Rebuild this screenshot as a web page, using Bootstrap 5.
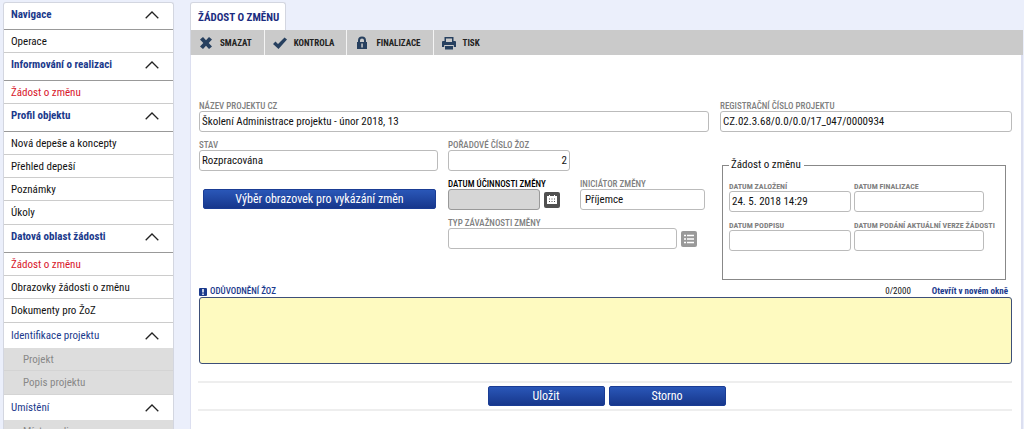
<!DOCTYPE html>
<html lang="cs">
<head>
<meta charset="utf-8">
<meta name="viewport" content="width=device-width, initial-scale=1">
<title>Žádost o změnu</title>
<link href="https://cdn.jsdelivr.net/npm/bootstrap@5.3.0/dist/css/bootstrap.min.css" rel="stylesheet">
<style>
  body { background: #ebeffb; color: #111; font: 11px/16px "Roboto Condensed", "Liberation Sans Narrow", sans-serif; }
  .page { min-height: 100vh; padding: 2px 1px 0 3px; gap: 16px; }
  .page-side { flex: 0 0 171px; background: #fff; border: 1px solid #d3d6e0; border-bottom: 0; border-radius: 3px 3px 0 0; height: calc(100vh - 2px); overflow: hidden; }
  .side-head { height: 28px; width: 100%; padding: 0 14px 3px 7px; border: 0; border-bottom: 1px solid #999; background: none; color: #1b3a8c; font-weight: bold; text-align: left; }
  .side-head.top-head { height: 27px; padding-bottom: 2px; }
  .side-head.sub-head { height: 25px; font-weight: normal; border: 0; padding-bottom: 0; }
  .side-head svg { width: 14px; height: 8px; }
  .side-list a { display: block; height: 23px; line-height: 24px; padding-left: 7px; color: #111; text-decoration: none; border-bottom: 1px solid #ccc; white-space: nowrap; }
  .side-list li + li:last-child a { height: 24px; }
  .side-list a.active { color: #d8152a; }
  .side-list.sub-list a { background: #ddd; color: #888; padding-left: 19px; border-color: #d4d4d4; }
  .page-main { min-width: 0; }
  .tab-title { height: 28px; padding: 1px 6px 0 7px; background: #fff; border: 1px solid #d3d6e0; border-bottom: 0; border-radius: 3px 3px 0 0; color: #1b2c80; font-size: 11px; line-height: 27px; font-weight: bold; }
  .toolbar { background: #cacaca; height: 25px; border-left: 1px solid #d3d6e0; }
  .tool { border: 0; border-right: 1px solid #f4f4f4; background: none; padding: 0 12px 0 8px; gap: 7px; font-size: 9px; font-weight: bold; color: #222; }
  .tool:last-child { border: 0; }
  .tool svg { width: 14px; height: 14px; fill: #27405f; }
  .panel { background: #fff; border: solid #dcdff0; border-width: 0 2px 0 1px; padding: 46px 9px 0 8px; }
  .form-label { display: block; margin: 0; font-size: 9px; line-height: 11px; height: 10px; font-weight: 500; color: #808080; white-space: nowrap; }
  .form-control { height: 21px; min-height: 0; padding: 0 2px; font-size: 11px; line-height: 19px; color: #111; border: 1px solid #bbb; border-radius: 3px; }
  .form-control:disabled { background: #d6d6d6; border-color: #999; }
  .side-col { flex: 0 0 292px; min-width: 0; }
  .form-row { gap: 11px; }
  .left-cols { gap: 10px; min-width: 0; }
  .lead-col { flex: 239 1 0; }
  .detail-col { flex: 261 1 0; }
  .stack { display: flex; flex-direction: column; gap: 8px; }
  .num-box { width: 122px; }
  .effect-box { flex: 0 0 112px; }
  .btn-blue { --bs-btn-color: #fff; --bs-btn-hover-color: #fff; height: 20px; padding: 0; font-size: 12px; line-height: 18px; border: 1px solid #1a3c94; border-radius: 2px; background: linear-gradient(#2a57b8, #17378c); }
  .screens { padding: 18px 2px 0 4px; }
  .pick { flex: 0 0 16px; height: 16px; border: 0; border-radius: 2px; background: #505050; padding: 0; }
  .pick.pale { background: #999; }
  .pick svg { display: block; margin: auto; width: 10px; height: 10px; }
  .date-box { border: 1px solid #888; height: 122px; padding: 0 2px 0 6px; margin: 18px 6px 0 2px; }
  .date-box legend { float: none; width: auto; margin: 0 0 9px; padding: 0 3px 0 2px; font-size: 11px; line-height: 14px; color: #111; }
  .date-box .form-label { font-size: 8px; font-weight: bold; }
  .date-grid { display: grid; grid-template-columns: 122px 130px; gap: 8px 3px; }
  .reason { height: 67px; background: #fefac0; border-color: #3d4f78; resize: none; }
  .form-label.reason-label { color: #1b3a8c; display: flex; gap: 3px; }
  .reason-label svg { width: 8px; height: 8px; margin-top: 2px; }
  .reason-head { margin-top: 6px; height: 11px; }
  .link-open { color: #1b3a8c; font-weight: bold; text-decoration: none; }
  .reason-info { font-size: 9px; line-height: 10px; gap: 21px; }
  .actions { border: solid #eee; border-width: 2px 0; padding: 3px 0 3px 3px; margin: 17px 0 0 -1px; gap: 4px; }
  .actions .btn { width: 117px; }
</style>
</head>
<body>
<svg class="d-none"><symbol id="up" viewBox="0 0 14 8"><path d="M.7 7.3 7 1l6.3 6.3" fill="none" stroke="#222" stroke-width="1.3"/></symbol></svg>
<div class="page d-flex">
  <nav class="page-side">
    <button type="button" class="side-head top-head d-flex align-items-center justify-content-between">Navigace<svg><use href="#up"/></svg></button>
    <ul class="side-list list-unstyled m-0"><li><a href="#">Operace</a></li></ul>
    <button type="button" class="side-head d-flex align-items-center justify-content-between">Informování o realizaci<svg><use href="#up"/></svg></button>
    <ul class="side-list list-unstyled m-0"><li><a href="#" class="active">Žádost o změnu</a></li></ul>
    <button type="button" class="side-head d-flex align-items-center justify-content-between">Profil objektu<svg><use href="#up"/></svg></button>
    <ul class="side-list list-unstyled m-0">
      <li><a href="#">Nová depeše a koncepty</a></li>
      <li><a href="#">Přehled depeší</a></li>
      <li><a href="#">Poznámky</a></li>
      <li><a href="#">Úkoly</a></li>
    </ul>
    <button type="button" class="side-head d-flex align-items-center justify-content-between">Datová oblast žádosti<svg><use href="#up"/></svg></button>
    <ul class="side-list list-unstyled m-0">
      <li><a href="#" class="active">Žádost o změnu</a></li>
      <li><a href="#">Obrazovky žádosti o změnu</a></li>
      <li><a href="#">Dokumenty pro ŽoZ</a></li>
    </ul>
    <button type="button" class="side-head sub-head d-flex align-items-center justify-content-between">Identifikace projektu<svg><use href="#up"/></svg></button>
    <ul class="side-list sub-list list-unstyled m-0">
      <li><a href="#">Projekt</a></li>
      <li><a href="#">Popis projektu</a></li>
    </ul>
    <button type="button" class="side-head sub-head d-flex align-items-center justify-content-between">Umístění<svg><use href="#up"/></svg></button>
    <ul class="side-list sub-list list-unstyled m-0"><li><a href="#">Místo realizace</a></li></ul>
  </nav>

  <main class="page-main d-flex flex-column flex-grow-1">
    <div class="d-flex"><h1 class="tab-title m-0">ŽÁDOST O ZMĚNU</h1></div>
    <div class="toolbar d-flex">
      <button type="button" class="tool d-flex align-items-center"><svg viewBox="0 0 14 14"><path d="M4 1 7 4.300 10 1l3 2.500L9.700 7 13 10.500 10 13 7 9.700 4 13 1 10.500 4.300 7 1 3.500z"/></svg>SMAZAT</button>
      <button type="button" class="tool d-flex align-items-center"><svg viewBox="0 0 14 14"><path d="M0 8 2.500 5.500 5 8l6.500-6.500L14 3.500 5.500 13z"/></svg>KONTROLA</button>
      <button type="button" class="tool d-flex align-items-center"><svg viewBox="0 0 14 14"><path fill-rule="evenodd" d="M2 6h1V4.500a4 4 0 0 1 8 0V6h1v7H2zM5 6h4V4.500a2 2 0 0 0-4 0zM6.300 7.500v4h1.500v-4z"/></svg>FINALIZACE</button>
      <button type="button" class="tool d-flex align-items-center"><svg viewBox="0 0 14 14"><path fill-rule="evenodd" d="M2.500 1h9v4H13a1 1 0 0 1 1 1v5h-2.200V9H2.200v2H0V6a1 1 0 0 1 1-1h1.500zM4 2.500V6h6V2.500zM3 10h8v3.500H3z"/></svg>TISK</button>
    </div>

    <form class="panel flex-grow-1">
      <div class="form-row d-flex mb-2">
        <div class="flex-grow-1">
          <label class="form-label" for="name">NÁZEV PROJEKTU CZ</label>
          <input class="form-control" id="name" value="Školení Administrace projektu - únor 2018, 13">
        </div>
        <div class="side-col">
          <label class="form-label" for="reg">REGISTRAČNÍ ČÍSLO PROJEKTU</label>
          <input class="form-control" id="reg" value="CZ.02.3.68/0.0/0.0/17_047/0000934">
        </div>
      </div>

      <div class="form-row d-flex">
        <div class="left-cols d-flex flex-grow-1">
          <div class="lead-col">
            <label class="form-label" for="state">STAV</label>
            <input class="form-control" id="state" value="Rozpracována">
            <div class="screens"><button type="button" class="btn btn-blue d-block w-100">Výběr obrazovek pro vykázání změn</button></div>
          </div>
          <div class="detail-col stack">
            <div class="num-box">
              <label class="form-label" for="num">POŘADOVÉ ČÍSLO ŽOZ</label>
              <input class="form-control text-end" id="num" value="2">
            </div>
            <div class="d-flex">
              <div class="effect-box me-3">
                <label class="form-label text-black" for="eff">DATUM ÚČINNOSTI ZMĚNY</label>
                <div class="d-flex align-items-center gap-1">
                  <input class="form-control" id="eff" disabled>
                  <button type="button" class="pick" aria-label="Kalendář"><svg viewBox="0 0 10 10"><path d="M0 1h2V0h1v1h4V0h1v1h2v8H0z" fill="#fff"/><path d="M2 4h1M4.500 4h1M7 4h1M2 6.500h1M4.500 6.500h1M7 6.500h1" stroke="#505050"/></svg></button>
                </div>
              </div>
              <div class="flex-grow-1 ms-1 pe-1">
                <label class="form-label" for="init">INICIÁTOR ZMĚNY</label>
                <input class="form-control ps-1" id="init" value="Příjemce">
              </div>
            </div>
            <div class="pe-2 me-1">
              <label class="form-label" for="type">TYP ZÁVAŽNOSTI ZMĚNY</label>
              <div class="d-flex align-items-center gap-1">
                <input class="form-control" id="type">
                <button type="button" class="pick pale" aria-label="Seznam"><svg viewBox="0 0 10 10"><path d="M0 1.500h2M0 5h2M0 8.500h2M3 1.500h7M3 5h7M3 8.500h7" stroke="#fff" stroke-width="1.700"/></svg></button>
              </div>
            </div>
          </div>
        </div>
        <div class="side-col">
          <fieldset class="date-box">
            <legend>Žádost o změnu</legend>
            <div class="date-grid">
              <div><label class="form-label" for="d1">DATUM ZALOŽENÍ</label><input class="form-control" id="d1" value="24. 5. 2018 14:29"></div>
              <div><label class="form-label" for="d2">DATUM FINALIZACE</label><input class="form-control" id="d2"></div>
              <div><label class="form-label" for="d3">DATUM PODPISU</label><input class="form-control" id="d3"></div>
              <div><label class="form-label" for="d4">DATUM PODÁNÍ AKTUÁLNÍ VERZE ŽÁDOSTI</label><input class="form-control" id="d4"></div>
            </div>
          </fieldset>
        </div>
      </div>

      <div class="reason-head d-flex justify-content-between">
        <label class="form-label reason-label" for="reason"><svg viewBox="0 0 8 8"><rect width="8" height="8" rx="1" fill="#1b3a8c"/><path d="M4 1v3.500M4 5.500V7" stroke="#fff" stroke-width="1.500"/></svg>ODŮVODNĚNÍ ŽOZ</label>
        <div class="reason-info d-flex pe-1"><span>0/2000</span><a class="link-open" href="#">Otevřít v novém okně</a></div>
      </div>
      <textarea class="form-control reason" id="reason"></textarea>
      <div class="actions d-flex justify-content-center">
        <button type="button" class="btn btn-blue">Uložit</button>
        <button type="button" class="btn btn-blue">Storno</button>
      </div>
    </form>
  </main>
</div>
<script src="https://cdn.jsdelivr.net/npm/bootstrap@5.3.0/dist/js/bootstrap.bundle.min.js"></script>
</body>
</html>
